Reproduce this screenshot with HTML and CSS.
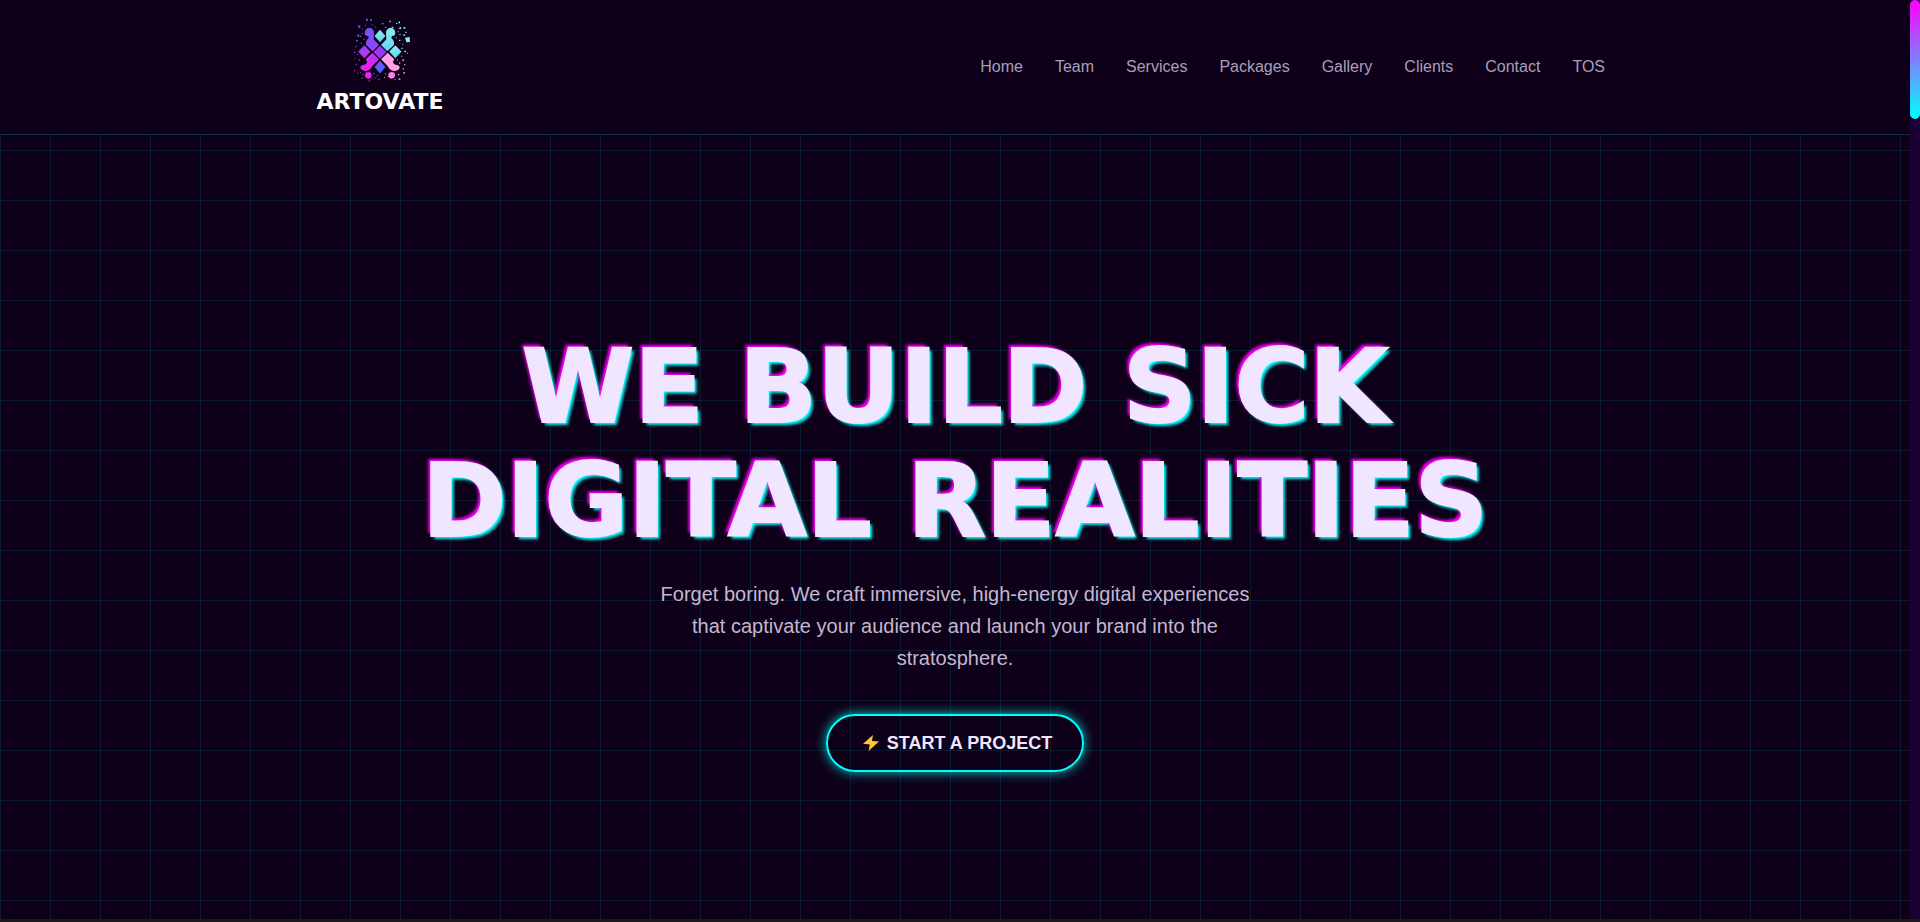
FILE: index.html
```
<!DOCTYPE html>
<html lang="en">
<head>
<meta charset="utf-8">
<title>Artovate</title>
<link rel="stylesheet" href="styles.css">
</head>
<body>
<div class="window">
  <div class="page">
    <header class="site-header">
      <div class="container">
        <a class="logo" href="#home" aria-label="Artovate">
          <svg class="logo-mark" viewBox="0 0 240 225" aria-hidden="true">
            <defs>
              <linearGradient id="violet" gradientUnits="userSpaceOnUse" x1="80" y1="50" x2="80" y2="205">
                <stop offset="0" stop-color="#6a55ff"/><stop offset=".35" stop-color="#8a48f8"/><stop offset=".75" stop-color="#e51fee"/><stop offset="1" stop-color="#e51fee"/>
              </linearGradient>
              <linearGradient id="aqua" x1="0" y1="0" x2="0" y2="1"><stop offset="0" stop-color="#8ceaf2"/><stop offset="1" stop-color="#5fd6f0"/></linearGradient>
              <linearGradient id="blue" x1="0" y1="0" x2="0" y2="1"><stop offset="0" stop-color="#7c50ff"/><stop offset="1" stop-color="#4763ff"/></linearGradient>
            </defs>
            <path fill="url(#violet)" d="M74 72Q74 54 89 53Q103 55 102 72L101 88L117 105L98 124L78 105Q76 92 86 84L84 77Q80 79 76 75z"/>
            <path fill="url(#aqua)" d="M166 72Q166 54 151 53Q137 55 138 72L139 88L123 105L142 124L162 105Q164 92 154 84L156 77Q160 79 164 75z"/>
            <path fill="url(#aqua)" stroke="url(#aqua)" stroke-width="3" stroke-linejoin="round" d="M120 61l15 17-15 17-15-17z"/>
            <path fill="url(#violet)" stroke="url(#violet)" stroke-width="4" stroke-linejoin="round" d="M73 109l16 16-16 17-16-17z"/>
            <path fill="url(#aqua)" stroke="url(#aqua)" stroke-width="4" stroke-linejoin="round" d="M166 109l16 16-16 17-16-17z"/>
            <path fill="#9e35f5" d="M120 107l20 19-20 20-20-20z"/>
            <path fill="url(#violet)" d="M97 128L117 148L97 168Q90 183 76 183Q61 181 61 172Q62 164 74 164Q86 160 77 148z"/>
            <path fill="#ffa0e4" d="M143 128L123 148L143 168Q150 183 164 183Q179 181 179 172Q178 164 166 164Q154 160 163 148z"/>
            <path fill="url(#blue)" stroke="url(#blue)" stroke-width="3" stroke-linejoin="round" d="M120 154l15 17-15 18-15-18z"/>
            <circle fill="#ee20ee" cx="85" cy="196" r="10"/><circle fill="#ff7be8" cx="155" cy="196" r="10"/>
            <path fill="#8ceaf2" d="M195 83l14-2 1 15-11 1zM175 36l5-2v6h-5zM177 53l6-2 1 6h-6zM168 39h4v3h-4zM148 32h4v5h-4zM155 50h5v4h-5zM126 40h4v3h-4zM190 52l6-1v5h-5zM196 65h4v4h-4zM190 73h5v4h-5zM178 72h4v3h-4zM177 89h4v4h-4zM187 101h3v3h-3zM184 113h4v4h-4zM193 122h5v4h-5zM200 128h3v3h-3zM136 51h3v3h-3zM173 64h3v3h-3zM167 82h3v3h-3z"/>
            <path fill="#4d62dd" d="M78 25l5 2v7l-5-2zM90 27h5v6h-5zM54 45l8 2-2 6-5 1zM65 55h3v3h-3zM75 44h3v3h-3zM51 73l7 1v7l-5-1zM60 77h4v4h-4zM48 89l6 1-1 5-5-1zM66 69h3v3h-3zM70 86h4v3h-4zM46 108h4v4h-4zM62 98h3v4h-3zM95 43h3v3h-3zM104 50h3v3h-3z"/>
            <path fill="#a438c9" d="M42 125h4v4h-4zM51 132h3v3h-3zM43 145h3v3h-3zM56 148h4v4h-4zM47 161h4v4h-4zM42 180h3v4h-3zM52 188h4v3h-4zM61 187h3v3h-3zM67 192h4v4h-4zM64 203h4v4h-4zM86 211h4v4h-4zM97 205h3v3h-3zM106 202h3v3h-3zM115 206h4v4h-4zM100 189h4v4h-4zM110 195h3v3h-3z"/>
            <path fill="#dc89bd" d="M187 148h5v5h-5zM177 157h4v4h-4zM192 162h4v4h-4zM188 175h4v4h-4zM190 186h5v5h-5zM174 192h4v4h-4zM176 205h5v5h-5zM164 207h3v3h-3zM143 198h3v3h-3zM132 201h3v3h-3zM183 137h4v3h-4zM171 149h3v3h-3zM135 190h3v3h-3z"/>
          </svg>
          <span class="logo-name">ARTOVATE</span>
        </a>
        <nav class="nav" aria-label="Main">
          <a href="#home">Home</a>
          <a href="#team">Team</a>
          <a href="#services">Services</a>
          <a href="#packages">Packages</a>
          <a href="#gallery">Gallery</a>
          <a href="#clients">Clients</a>
          <a href="#contact">Contact</a>
          <a href="#tos">TOS</a>
        </nav>
      </div>
    </header>
    <main class="hero">
      <h1>WE BUILD SICK<br>DIGITAL REALITIES</h1>
      <p>Forget boring. We craft immersive, high-energy digital experiences that captivate your audience and launch your brand into the stratosphere.</p>
      <a class="cta" href="#contact">
        <svg class="bolt" viewBox="0 0 16 16" aria-hidden="true"><path fill="#ffc634" d="M10 0L0 8.8l6.8.6L5.6 16 16 6.6 9 6z"/></svg>
        START A PROJECT
      </a>
    </main>
  </div>
  <div class="scroll-track"><div class="scroll-thumb"></div></div>
</div>
<div class="bottom-strip"></div>
</body>
</html>
```
FILE: styles.css
```
* {
  box-sizing: border-box;
}

body {
  margin: 0;
  min-height: 100vh;
  display: flex;
  flex-direction: column;
  background: #0d0018;
  color: #f0e6ff;
  font-family: "Liberation Sans", Arial, sans-serif;
  font-size: 16px;
}

.window {
  flex: 1;
  display: flex;
}

.page {
  flex: 1;
  display: flex;
  flex-direction: column;
  background-image:
    linear-gradient(rgba(0, 255, 255, 0.1) 1px, transparent 1px),
    linear-gradient(90deg, rgba(0, 255, 255, 0.1) 1px, transparent 1px);
  background-size: 50px 50px;
}

.site-header {
  background: #0d0018;
  border-bottom: 1px solid rgba(0, 255, 255, 0.2);
}

.container {
  max-width: 1300px;
  margin: 0 auto;
  padding: 10px 0 20px;
  display: flex;
  align-items: center;
  justify-content: space-between;
}

.logo {
  display: flex;
  flex-direction: column;
  align-items: center;
  width: 150px;
  color: #fff;
  text-decoration: none;
}

.logo-mark {
  width: 80px;
  height: 75px;
}

.logo-name {
  margin-top: 5px;
  font: bold 22px/24px "DejaVu Sans", sans-serif;
}

.nav {
  display: flex;
  gap: 32px;
  padding-top: 10px;
}

.nav a {
  color: #a99fb8;
  line-height: 24px;
  text-decoration: none;
}

.hero {
  flex: 1;
  display: flex;
  flex-direction: column;
  align-items: center;
  justify-content: center;
  padding-top: 48px;
  text-align: center;
}

h1 {
  margin: 0 0 20px;
  font: 900 102px/114px "DejaVu Sans", "Arial Black", sans-serif;
  -webkit-text-stroke: 2px #f0e6ff;
  text-shadow: -3px -3px 3px #f0f, 3px 3px 3px #0ff;
}

.hero p {
  max-width: 600px;
  margin: 0 0 40px;
  color: #c3b8d1;
  font-size: 20px;
  line-height: 32px;
}

.cta {
  display: flex;
  align-items: center;
  gap: 8px;
  padding: 14px 30px 14px 35px;
  border: 2px solid #0ff;
  border-radius: 50px;
  box-shadow: 0 0 12px rgba(0, 255, 255, 0.8);
  color: #f0e6ff;
  font-size: 18px;
  font-weight: bold;
  line-height: 26px;
  text-decoration: none;
}

.bolt {
  width: 16px;
  height: 16px;
}

.scroll-track {
  width: 10px;
  background: #1a0033;
}

.scroll-thumb {
  height: 119px;
  border-radius: 5px;
  background: linear-gradient(#f0f, #0ff);
}

.bottom-strip {
  height: 3px;
  background: #1b1a19;
}
```
